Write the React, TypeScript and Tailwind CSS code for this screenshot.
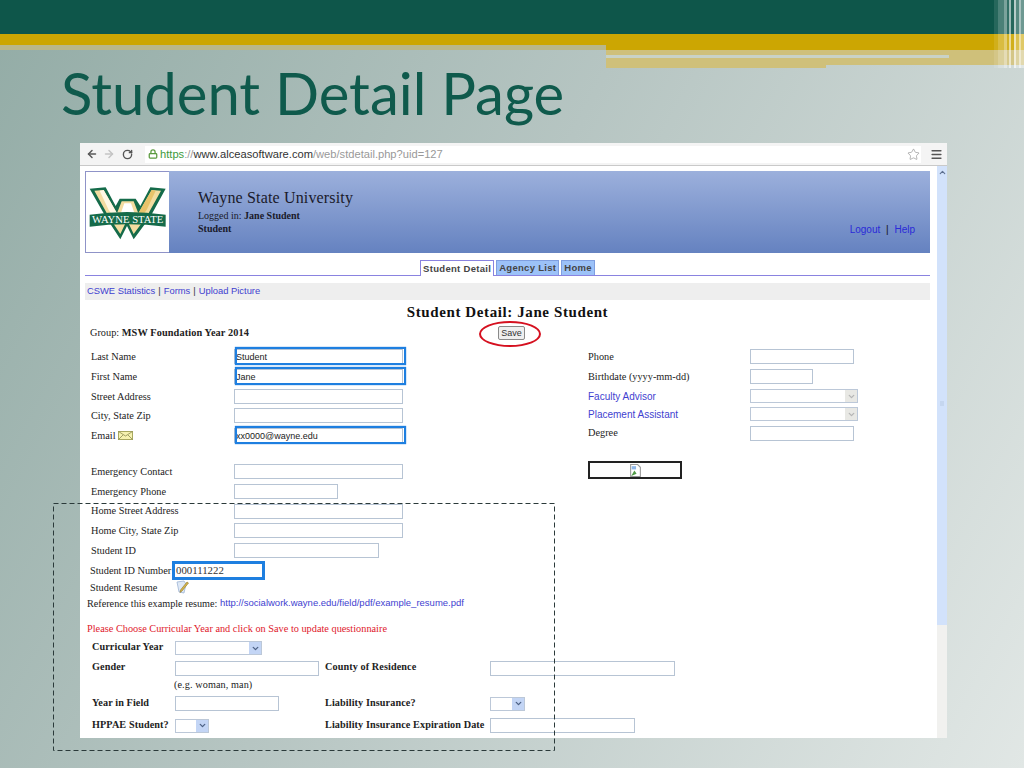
import React from "react";
import { ArrowLeft, ArrowRight, RotateCw, Lock, Star, Menu, ChevronUp, ChevronDown } from "lucide-react";

const serif = "font-['Liberation_Serif','Times_New_Roman',serif]";
const arial = "font-['Liberation_Sans',Arial,sans-serif]";

function Logo() {
  return (
    <svg viewBox="3 3 249 246" width="83" height="82" className="block">
      <polygon points="14,56 62,52 92,108 104,86 152,86 166,108 196,52 242,56 196,140 146,208 126,168 106,208 62,140" fill="#156b4a" />
      <polygon points="28,62 56,60 96,130 110,94 146,94 160,130 200,60 228,62 186,138 146,192 126,150 106,192 70,138" fill="#f3dca0" />
      <polygon points="44,62 56,60 96,130 92,150 70,118" fill="#fff8e4" />
      <polygon points="212,62 200,60 160,130 164,150 186,118" fill="#e8c36a" />
      <polygon points="118,100 138,100 148,128 108,128" fill="#ffffff" />
      <path d="M14 134 Q126 118 242 134 L242 170 Q126 156 14 170 Z" fill="#156b4a" />
      <text x="128" y="158" textAnchor="middle" fontSize="32" fill="#ffffff" textLength="214" lengthAdjust="spacingAndGlyphs" fontFamily="Liberation Serif, serif">WAYNE STATE</text>
    </svg>
  );
}

function Field({ w, value, hi }: { w: string; value?: string; hi?: boolean }) {
  return (
    <div className={`relative ${w} h-[15px]`}>
      <input
        readOnly
        defaultValue={value ?? ""}
        className={`${w} h-[15px] block border border-[#b7c4d4] bg-white px-[1px] text-[9px] text-[#222] ${arial}`}
      />
      {hi && <div className="absolute -top-[2px] left-[1px] right-[-3px] -bottom-[1px] border-2 border-[#1e7fe0] shadow-[0_0_1px_#1e7fe0]" />}
    </div>
  );
}

function Sel({ w, disabled }: { w: string; disabled?: boolean }) {
  return (
    <div className={`${w} h-[14px] flex justify-end border border-[#bcc8d8] bg-white`}>
      <div className={`w-[12px] flex items-center justify-center ${disabled ? "bg-[#e8e8e4]" : "bg-[#c3d5f5]"}`}>
        <ChevronDown size={9} strokeWidth={3.5} className={disabled ? "text-[#b5b5b5]" : "text-[#4d6185]"} />
      </div>
    </div>
  );
}

function Row({ label, children, h = "h-[19.7px]" }: { label: React.ReactNode; children: React.ReactNode; h?: string }) {
  return (
    <div className={`flex items-center ${h}`}>
      <div className={`w-[149px] pl-[6px] text-[10.3px] text-[#222] ${serif}`}>{label}</div>
      {children}
    </div>
  );
}

function RRow({ label, children, blue, h = "h-[19px]" }: { label: string; children: React.ReactNode; blue?: boolean; h?: string }) {
  return (
    <div className={`flex items-center ${h}`}>
      <div className={`w-[162px] ${blue ? `text-[10px] text-[#3f3fd0] ${arial}` : `text-[10.3px] text-[#222] ${serif}`}`}>{label}</div>
      {children}
    </div>
  );
}

export default function App() {
  return (
    <div className="relative w-[1024px] h-[768px] overflow-hidden bg-[linear-gradient(118deg,#93aca6_0%,#b6c5c2_45%,#e1e7e5_100%)]">
      {/* slide top bands */}
      <div className="h-[34px] bg-[#0e564a]" />
      <div className="flex h-[34px]">
        <div className="w-[606px]">
          <div className="h-[11px] bg-[#cca602]" />
          <div className="h-[5px] bg-[#b9b78a]" />
        </div>
        <div className="flex-1 relative">
          <div className="h-[16px] bg-[#cca602]" />
          <div className="flex">
            <div className="w-[220px] h-[18px] bg-[#cfc07a]" />
            <div className="flex-1 h-[15px] bg-[#cfc07a]" />
          </div>
          <div className="absolute left-0 top-[21px] w-[343px] h-[3px] bg-[#c9d2c6]" />
        </div>
      </div>
      <div className="absolute right-0 top-0 h-[68px] w-[30px] flex">
        <div className="w-[4px] bg-white/10" />
        <div className="w-[6px] bg-white/25" />
        <div className="w-[3px] bg-white/45" />
        <div className="w-[2px] bg-white/15" />
        <div className="w-[2px] bg-white/60" />
        <div className="w-[3px] bg-white/10" />
        <div className="w-[2px] bg-white/70" />
        <div className="w-[3px] bg-white/30" />
        <div className="w-[2px] bg-white/65" />
        <div className="w-[3px] bg-white/40" />
      </div>

      {/* title */}
      <h1 className="ml-[61px] mt-[-16px] h-[81px] leading-[81px] text-[58px] text-[#0f5a4c] font-['Lato',sans-serif] font-normal">
        Student Detail Page
      </h1>

      {/* browser */}
      <div className="ml-[80px] w-[867px] h-[595px] mt-[10px] bg-white flex flex-col">
        <div className="h-[23px] bg-[#f4f4f4] border-b border-[#c9c9c9] flex items-center shrink-0">
          <div className="w-[65px] flex items-center pl-[6px] gap-[5px]">
            <ArrowLeft size={12} strokeWidth={3} className="text-[#5a5a5a]" />
            <ArrowRight size={12} strokeWidth={3} className="text-[#c4c4c4]" />
            <RotateCw size={11} strokeWidth={3} className="text-[#555] ml-[2px]" />
          </div>
          <div className="w-[776px] h-[17px] bg-white flex items-center pl-[3px]">
            <Lock size={10} strokeWidth={3} className="text-[#5a9a3e] mr-[2px]" />
            <span className={`text-[11.15px] ${arial}`}>
              <span className="text-[#3c9a3c]">https</span>
              <span className="text-[#999]">://</span>
              <span className="text-[#333]">www.alceasoftware.com</span>
              <span className="text-[#999]">/web/stdetail.php?uid=127</span>
            </span>
            <Star size={13} strokeWidth={1} className="text-[#777] ml-auto mr-[1px]" />
          </div>
          <Menu size={13} strokeWidth={3} className="text-[#555] ml-[9px]" />
        </div>

        <div className="flex flex-1 min-h-0">
          <div className="w-[857px] pl-[5px] pr-[7px] pt-[5px] flex flex-col">
            {/* header */}
            <div className="h-[82px] flex bg-[linear-gradient(180deg,#9cb0dc,#6582c0)] shrink-0">
              <div className="w-[84px] bg-white border border-[#8f93c8] border-r-0 flex items-center justify-center">
                <Logo />
              </div>
              <div className={`ml-[29px] pt-[18px] text-[#1a1a2a] ${serif}`}>
                <div className="text-[16px] leading-[18px] tracking-[0.01em]">Wayne State University</div>
                <div className="text-[10px] leading-[13px] mt-[2px]">Logged in: <b>Jane Student</b></div>
                <div className="text-[10px] leading-[13px] font-bold">Student</div>
              </div>
              <div className={`ml-auto self-end mb-[16px] pr-[15px] text-[10px] text-[#2a2ad8] ${arial}`}>
                Logout <span className="text-[#111] mx-[3px]">|</span> Help
              </div>
            </div>

            {/* tabs */}
            <div className={`h-[23px] border-b border-[#8a83e0] flex items-end justify-center gap-[2px] shrink-0 text-[9.5px] font-bold text-[#444] leading-none tracking-[0.3px] ${arial}`}>
              <div className="h-[16px] mb-[-1px] px-[2px] bg-white border border-b-0 border-[#8a83e0] flex items-center">Student Detail</div>
              <div className="h-[15px] px-[2px] bg-[#9cc2f8] border border-b-0 border-[#7f9fe0] flex items-center">Agency List</div>
              <div className="h-[15px] px-[2px] bg-[#9cc2f8] border border-b-0 border-[#7f9fe0] flex items-center">Home</div>
            </div>

            {/* links */}
            <div className={`h-[17px] mt-[7px] bg-[#eeeeee] pl-[2px] flex items-center text-[9.4px] text-[#3f3fd0] shrink-0 ${arial}`}>
              CSWE Statistics <span className="text-[#333] mx-[3px]">|</span> Forms <span className="text-[#333] mx-[3px]">|</span> Upload Picture
            </div>

            {/* heading */}
            <div className={`h-[24px] flex items-center justify-center text-[15px] font-bold tracking-[0.04em] text-[#111] shrink-0 ${serif}`}>
              Student Detail: Jane Student
            </div>

            {/* group + save */}
            <div className={`relative h-[23px] flex items-center pl-[5px] pb-[5px] text-[10.3px] text-[#222] shrink-0 ${serif}`}>
              <span>Group: <b className="tracking-[0.1px]">MSW Foundation Year 2014</b></span>
              <button className={`absolute left-[413px] top-[2px] w-[27px] h-[14px] rounded-[2px] border border-[#8a8a8a] bg-[#efefef] text-[9px] text-[#333] leading-none ${arial}`}>Save</button>
              <div className="absolute left-[394px] top-[-3px] w-[62px] h-[26px] rounded-[50%] border-2 border-[#d5101f]" />
            </div>

            {/* two columns */}
            <div className="flex shrink-0">
              <div className="w-[503px]">
                <Row label="Last Name"><Field w="w-[169px]" value="Student" hi /></Row>
                <Row label="First Name"><Field w="w-[169px]" value="Jane" hi /></Row>
                <Row label="Street Address"><Field w="w-[169px]" /></Row>
                <Row label="City, State Zip"><Field w="w-[169px]" /></Row>
                <Row label={
                  <span className="flex items-center gap-[2px]">Email
                    <svg width="15" height="9" viewBox="0 0 15 9">
                      <rect x="0.5" y="0.5" width="14" height="8" fill="#f6f2b0" stroke="#a8a860" />
                      <path d="M0.5 0.5 L7.5 5 L14.5 0.5 M0.5 8.5 L5 4 M14.5 8.5 L10 4" fill="none" stroke="#8a8a50" strokeWidth="0.8" />
                    </svg>
                  </span>
                }><Field w="w-[169px]" value="xx0000@wayne.edu" hi /></Row>
                <div className="h-[16.5px]" />
                <Row label="Emergency Contact"><Field w="w-[169px]" /></Row>
                <Row label="Emergency Phone"><Field w="w-[104px]" /></Row>
                <Row label="Home Street Address"><Field w="w-[169px]" /></Row>
                <Row label="Home City, State Zip"><Field w="w-[169px]" /></Row>
                <Row label="Student ID"><Field w="w-[145px]" /></Row>
              </div>
              <div className="flex-1">
                <RRow label="Phone"><Field w="w-[104px]" /></RRow>
                <RRow label="Birthdate (yyyy-mm-dd)" h="h-[21px]"><Field w="w-[63px]" /></RRow>
                <RRow label="Faculty Advisor" blue h="h-[18px]"><Sel w="w-[108px]" disabled /></RRow>
                <RRow label="Placement Assistant" blue h="h-[18px]"><Sel w="w-[108px]" disabled /></RRow>
                <RRow label="Degree" h="h-[20px]"><Field w="w-[104px]" /></RRow>
                <div className="mt-[18px] w-[94px] h-[18px] border-2 border-[#222] flex items-center justify-center">
                  <svg width="11" height="13" viewBox="0 0 10 12">
                    <path d="M0.5 0.5 H7 L9.5 3 V11.5 H0.5 Z" fill="#ffffff" stroke="#9a9a9a" />
                    <path d="M1 11 L4 6 L6 9 Z" fill="#4f9a45" />
                    <rect x="1.5" y="2" width="4" height="3" fill="#8fb8ea" />
                  </svg>
                </div>
              </div>
            </div>

            {/* student id number */}
            <div className={`flex items-center h-[19px] mt-[1px] pl-[5px] text-[10.3px] text-[#222] shrink-0 ${serif}`}>
              <span className="w-[82px] whitespace-nowrap">Student ID Number</span>
              <div className="w-[93px] h-[19px] border-[3px] border-[#1e7fe0] flex items-center pl-[1px] text-[10.8px] text-[#333] leading-none">000111222</div>
            </div>
            <div className={`flex items-center h-[16px] mt-[-1px] pl-[5px] text-[10.3px] text-[#222] shrink-0 ${serif}`}>
              <span className="w-[86px]">Student Resume</span>
              <svg width="14" height="14" viewBox="0 0 14 14">
                <path d="M1 2 L8 1 L10 4 L8 13 L3 12 Z" fill="#dfe9f6" stroke="#9db4d4" strokeWidth="0.8" />
                <path d="M12.5 3 L6 11 L4 12.5 L4.5 10 L11 2 Z" fill="#d8b64a" stroke="#8c7425" strokeWidth="0.6" />
              </svg>
            </div>
            <div className={`h-[16px] flex items-center pl-[2px] text-[10.2px] text-[#222] shrink-0 ${serif}`}>
              Reference this example resume:&nbsp;<span className={`text-[9.5px] text-[#3f3fd0] ${arial}`}>http://socialwork.wayne.edu/field/pdf/example_resume.pdf</span>
            </div>
            <div className={`h-[18px] mt-[8px] flex items-center pl-[2px] text-[10.3px] text-[#e0202c] shrink-0 ${serif}`}>
              Please Choose Curricular Year and click on Save to update questionnaire
            </div>

            {/* questionnaire */}
            <div className={`mt-[3px] text-[10.2px] font-bold tracking-[0.1px] text-[#222] shrink-0 ${serif}`}>
              <div className="flex items-center h-[16px] pl-[7px]">
                <span className="w-[83px] mb-[3px]">Curricular Year</span>
                <Sel w="w-[87px]" />
              </div>
              <div className="flex items-center h-[24px] pl-[7px]">
                <span className="w-[83px] mb-[3px]">Gender</span>
                <Field w="w-[144px]" />
                <span className="w-[165px] ml-[6px] mb-[3px]">County of Residence</span>
                <Field w="w-[185px]" />
              </div>
              <div className="h-[11px] flex items-center pl-[89px] pb-[2px] font-normal">(e.g. woman, man)</div>
              <div className="flex items-center h-[25px] pl-[7px]">
                <span className="w-[83px] mb-[3px]">Year in Field</span>
                <Field w="w-[104px]" />
                <span className="w-[165px] ml-[46px] mb-[3px]">Liability Insurance?</span>
                <Sel w="w-[35px]" />
              </div>
              <div className="flex items-center h-[19px] pl-[7px]">
                <span className="w-[83px] mb-[3px] whitespace-nowrap">HPPAE Student?</span>
                <Sel w="w-[34px]" />
                <span className="w-[165px] ml-[116px] mb-[3px] whitespace-nowrap">Liability Insurance Expiration Date</span>
                <Field w="w-[145px]" />
              </div>
            </div>
          </div>

          {/* scrollbar */}
          <div className="w-[10px] flex flex-col">
            <div className="flex-1 bg-[#d2e2fb] flex flex-col items-center relative">
              <ChevronUp size={9} strokeWidth={3} className="text-[#5d6f8f] mt-[2px]" />
              <div className="absolute top-[235px] w-[4px] h-[5px] bg-[#c5d6ef]" />
            </div>
            <div className="h-[113px] bg-[#f1f1ef]" />
          </div>
        </div>
      </div>

      {/* dashed annotation */}
      <svg className="absolute left-[53px] top-[503px] pointer-events-none" width="503" height="249" viewBox="0 0 503 249">
        <rect x="0.5" y="0.5" width="501" height="247" fill="none" stroke="#2b3a3a" strokeWidth="1" strokeDasharray="5 3" />
      </svg>
    </div>
  );
}
